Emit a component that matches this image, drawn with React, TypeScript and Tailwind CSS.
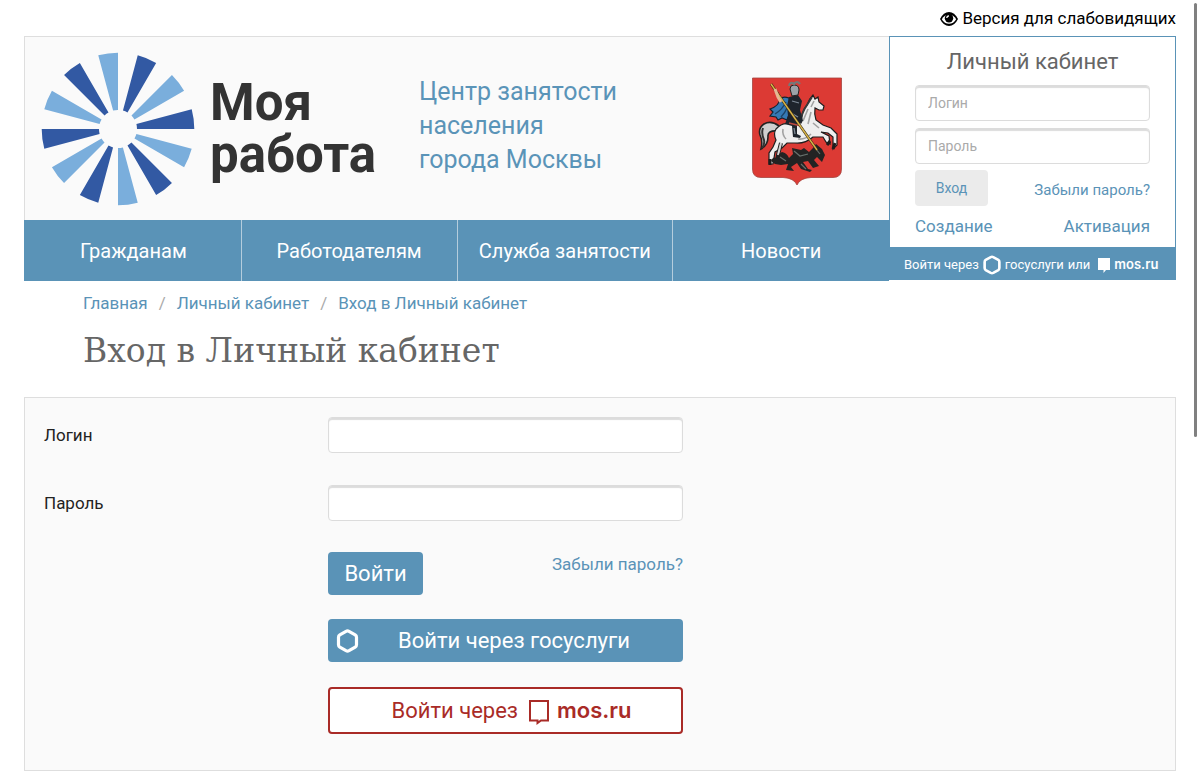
import React from "react";

const navItems = ["Гражданам", "Работодателям", "Служба занятости", "Новости"];

const rays = Array.from({ length: 12 }, (_, i) => i);

function SunLogo() {
  return (
    <svg viewBox="-77 -77 154 154" className="w-[154px] h-[154px] shrink-0" aria-hidden="true">
      {rays.map((i) => (
        <path
          key={i}
          d="M0 -19 L0 -76.3 A76.3 76.3 0 0 0 -19.75 -73.7 L-4.9 -18.4 A19 19 0 0 1 0 -19 Z"
          fill={i % 2 === 0 ? "#7aaedc" : "#3259a3"}
          transform={`rotate(${i * 30})`}
        />
      ))}
    </svg>
  );
}

function CoatOfArms() {
  return (
    <svg viewBox="0 0 92 109" className="w-[92px] h-[109px] shrink-0" role="img" aria-label="Герб Москвы">
      <path
        d="M1.5 1 H90.5 V92 Q90.5 100.5 82 100.5 H60 Q49 101 46 108 Q43 101 32 100.5 H10 Q1.5 100.5 1.5 92 Z"
        fill="#dc3a34"
        stroke="#a5453f"
        strokeWidth="0.8"
      />
      {/* tail */}
      <path d="M28 49 Q20 43 13 47 Q7 51 9 58 Q12 64 10 72 Q17 68 17 60 Q16 53 27 54 Z" fill="#cfcfcf" stroke="#222" strokeWidth="1.6" />
      <path d="M12 51 Q10 56 13 63 Q14 67 11 71" fill="none" stroke="#333" strokeWidth="2" />
      {/* cape */}
      <path d="M38 21 Q32 19 29 22 Q28 29 19 32 L22 35 L19 39 L25 40 L27 43 L31 41 L36 43 L40 32 Z" fill="#3579b5" stroke="#16222f" strokeWidth="1.2" />
      <path d="M35 25 Q31 33 24 37 M37 29 Q34 36 30 40" fill="none" stroke="#1d4468" strokeWidth="1.4" />
      {/* horse */}
      <path
        d="M25 52 Q31 45 39 47 L50 46 Q50 35 56 28 Q58 22 62 18 L64 22 L67 20 L68 25 L73 29 L72 33 L68 33 L64 31 Q63 37 65 43 L72 48 L80 51 L86 57 L86 68 L82 72 L82 60 L77 56 L70 55 L78 59 L79 67 L75 65 L72 60 L62 60 Q54 67 44 66 L36 66 L31 71 L24 75 L22 87 L18 87 L18 76 L22 70 L25 63 Q22 57 25 52 Z"
        fill="#efefef"
        stroke="#1e1e1e"
        strokeWidth="1.2"
      />
      <path d="M30 66 L27 78 L26 84" fill="none" stroke="#222" strokeWidth="4" />
      <path d="M30 66 L27 78" fill="none" stroke="#d5d5d5" strokeWidth="2" />
      <path d="M57 32 L52 44 M60 35 L57 47 M32 52 Q31 58 35 62 M47 62 Q54 63 60 57 M62 46 L68 51 M63 24 L60 30" fill="none" stroke="#a2a2a2" strokeWidth="1.6" />
      <path d="M50 46 Q50 36 56 28 L61 20" fill="none" stroke="#3a3a3a" strokeWidth="2" />
      <path d="M84 66 L82 72 M79 64 L76 68 M19 82 L19 88" stroke="#1d1d1d" strokeWidth="3" />
      {/* rider */}
      <path d="M38 20 L47 18 L51 24 L49 33 L52 44 L46 48 L46 57 L50 59 L49 61 L42 60 L41 49 L34 47 L37 39 L36 29 Z" fill="#1e242c" />
      <path d="M41 24 L48 26 M40 36 L47 40 M43 51 L44 57" stroke="#7d8995" strokeWidth="1.3" />
      <path d="M38 46 L50 49" stroke="#bc493e" strokeWidth="1.5" />
      <path d="M39 12 Q39 8 43 8 Q48 8 48 13 L47 18 L41 19 Z" fill="#9ca2a7" stroke="#222" strokeWidth="1" />
      <path d="M38 9 Q39 4 43 7 Q46 3 49 7" fill="none" stroke="#777" strokeWidth="2.2" />
      {/* dragon */}
      <path
        d="M20 84 Q22 78 28 82 Q26 77 31 75 Q36 76 38 81 L42 77 L41 71 L50 73 L53 71 L58 75 L62 71 L65 67 L71 72 L74 78 L71 85 L66 80 L63 83 L68 89 L62 91 L57 84 L52 85 L57 92 L61 93 L59 95 L50 92 L46 86 L40 90 L43 94 L35 93 L37 87 L30 88 L24 87 Z"
        fill="#232323"
      />
      <path d="M43 74 L49 79 L57 77 M65 72 L69 77 M29 80 L35 84 M50 87 L55 92" fill="none" stroke="#67706c" strokeWidth="1.2" />
      {/* spear */}
      <path d="M20 7 L66 73" stroke="#3a2d18" strokeWidth="2.6" />
      <path d="M20 7 L66 73" stroke="#d8b548" strokeWidth="1.4" />
      <path d="M24 12 L27 20 L30 25" fill="none" stroke="#e5b894" strokeWidth="3" />
    </svg>
  );
}

function EyeIcon() {
  return (
    <svg viewBox="0 0 18 14" className="w-[18px] h-[14px]" aria-hidden="true">
      <path d="M0 7 Q3.5 0 9 0 Q14.5 0 18 7 Q14.5 14 9 14 Q3.5 14 0 7 Z" fill="#000" />
      <path d="M1.8 7.2 Q4.5 2.8 9 2.8 Q13.5 2.8 16.2 7.2 Q13.5 11.8 9 11.8 Q4.5 11.8 1.8 7.2 Z" fill="#fff" />
      <circle cx="9" cy="6.2" r="4.2" fill="#000" />
      <path d="M6.8 6 A2.3 2.3 0 0 1 9 3.8" fill="none" stroke="#fff" strokeWidth="1.3" />
    </svg>
  );
}

function HexIcon({ className }: { className: string }) {
  return (
    <svg viewBox="0 0 22 24" className={className} aria-hidden="true">
      <path
        d="M9.5 2.3 Q11 1.5 12.5 2.3 L18.7 5.8 Q20 6.6 20 8.2 V15.8 Q20 17.4 18.7 18.2 L12.5 21.7 Q11 22.5 9.5 21.7 L3.3 18.2 Q2 17.4 2 15.8 V8.2 Q2 6.6 3.3 5.8 Z"
        fill="none"
        stroke="currentColor"
        strokeWidth="3.2"
        strokeLinejoin="round"
      />
    </svg>
  );
}

const inputClass =
  "block w-full h-9 rounded border border-[#dcdcdc] bg-white px-3 text-sm text-[#333] shadow-[inset_0_2px_1px_#dcdcdc] placeholder:text-[#aaa] outline-none";

export default function App() {
  return (
    <div className="relative font-[Roboto,sans-serif] bg-white text-[#222] px-6 pb-2">
      {/* scroll thumb */}
      <div className="absolute right-[3px] top-[3px] h-[434px] w-[3px] rounded-full bg-[#808080]" />

      <div className="flex justify-end h-9 items-center pt-[2px]">
        <a href="#" className="flex items-center gap-1 text-[17px] text-black">
          <EyeIcon />
          Версия для слабовидящих
        </a>
      </div>

      <header className="flex items-start">
        <div className="flex-1">
          <div className="flex items-center h-[184px] border-t border-l border-[#dedede] bg-[#fafafa] pl-4">
            <SunLogo />
            <div className="ml-[15px] w-[209px] text-[51px] leading-[52px] font-bold text-[#333]">
              Моя
              <br />
              работа
            </div>
            <p className="pb-[6px] text-[25px] leading-[34px] text-[#5a94b8]">
              Центр занятости
              <br />
              населения
              <br />
              города Москвы
            </p>
            <div className="ml-auto mr-[46px] pt-[6px]">
              <CoatOfArms />
            </div>
          </div>
          <nav className="grid grid-cols-4 h-[61px] bg-[#5a93b7] pl-[2px] divide-x divide-[#b4cddd]">
            {navItems.map((item) => (
              <a key={item} href="#" className="flex items-center justify-center text-xl text-white">
                {item}
              </a>
            ))}
          </nav>
        </div>

        <aside className="w-[287px] border border-[#5a93b7] bg-white">
          <form className="px-[25px] pt-[9px] h-[210px]">
            <h2 className="text-[22px] leading-8 text-center text-[#666]">Личный кабинет</h2>
            <div className="mt-[7px] space-y-[7px]">
              <input type="text" aria-label="Логин" placeholder="Логин" className={inputClass} />
              <input type="password" aria-label="Пароль" placeholder="Пароль" className={inputClass} />
            </div>
            <div className="mt-[6px] flex items-center justify-between">
              <button type="button" className="h-9 w-[73px] rounded bg-[#ebebeb] text-sm text-[#5a93b7]">
                Вход
              </button>
              <a href="#" className="pt-1 text-[15px] text-[#5a93b7]">
                Забыли пароль?
              </a>
            </div>
            <div className="mt-2 flex justify-between text-[17px] leading-6 text-[#5a93b7]">
              <a href="#">Создание</a>
              <a href="#">Активация</a>
            </div>
          </form>
          <div className="flex items-center h-8 bg-[#5a93b7] pl-[14px] pt-1 text-[13px] text-white">
            <span>Войти через</span>
            <a href="#" className="flex items-center gap-1 ml-1">
              <HexIcon className="w-[18px] h-5" />
              госуслуги
            </a>
            <span className="ml-1">или</span>
            <a href="#" className="flex items-center gap-1 ml-2 font-[Inter,sans-serif] font-semibold">
              <svg viewBox="0 0 12 15" className="w-3 h-[15px]" aria-hidden="true">
                <path d="M0 0 H12 V12 H8 L5.5 15 V12 H0 Z" fill="#fff" />
              </svg>
              mos.ru
            </a>
          </div>
        </aside>
      </header>

      <div className="pl-[59px]">
        <nav aria-label="Навигация" className="flex mt-3 text-[17px] leading-5 text-[#5a93b7]">
          <a href="#">Главная</a>
          <span className="mx-[11px] text-[#aaa]">/</span>
          <a href="#">Личный кабинет</a>
          <span className="mx-[11px] text-[#aaa]">/</span>
          <a href="#">Вход в Личный кабинет</a>
        </nav>
        <h1 className="mt-4 text-[33px] leading-[44px] text-[#666] font-['Roboto_Slab','DejaVu_Serif',serif]">
          Вход в Личный кабинет
        </h1>
      </div>

      <main className="mt-6 border border-[#dedede] bg-[#fafafa] px-[19px] pt-[19px] pb-9">
        <form className="grid grid-cols-[284px_355px] text-[17px]">
          <label htmlFor="login" className="leading-9">
            Логин
          </label>
          <input id="login" type="text" className={inputClass} />

          <label htmlFor="password" className="mt-8 leading-9">
            Пароль
          </label>
          <div className="mt-8">
            <input id="password" type="password" className={inputClass} />
          </div>

          <div className="col-start-2 mt-[31px] flex items-start justify-between">
            <button type="submit" className="h-[43px] w-[95px] rounded bg-[#5a93b7] text-[22px] text-white">
              Войти
            </button>
            <a href="#" className="leading-6 text-[#5a93b7]">
              Забыли пароль?
            </a>
          </div>

          <button type="button" className="col-start-2 mt-6 flex items-center h-[43px] rounded bg-[#5a93b7] pl-2 pr-[14px] text-[22px] text-white">
            <HexIcon className="w-[23px] h-6" />
            <span className="flex-1">Войти через госуслуги</span>
          </button>

          <button type="button" className="col-start-2 mt-[25px] flex items-center justify-center h-[47px] rounded border-2 border-[#a92b27] bg-white pl-3 text-[22px] text-[#a92b27]">
            Войти через
            <svg viewBox="0 0 20 25" className="ml-[11px] mt-1 w-5 h-[25px]" aria-hidden="true">
              <path d="M1 1 H19 V20.5 H12 L8.5 23 V20.5 H1 Z" fill="none" stroke="currentColor" strokeWidth="2" />
            </svg>
            <span className="ml-2 font-[Inter,sans-serif] font-semibold">mos.ru</span>
          </button>
        </form>
      </main>
    </div>
  );
}
